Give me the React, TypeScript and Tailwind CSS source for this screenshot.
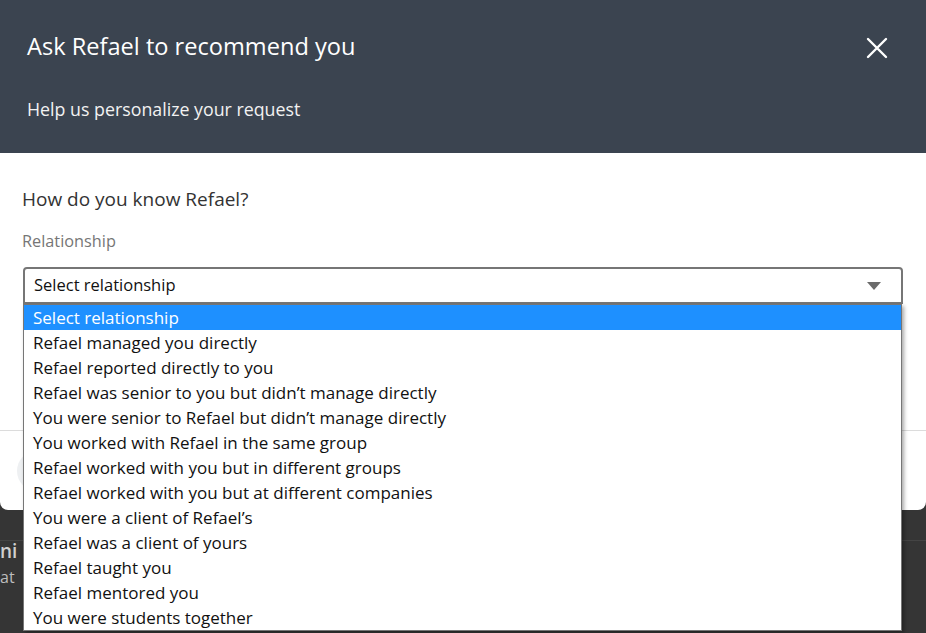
import React from "react";

const options = [
  "Select relationship",
  "Refael managed you directly",
  "Refael reported directly to you",
  "Refael was senior to you but didn\u2019t manage directly",
  "You were senior to Refael but didn\u2019t manage directly",
  "You worked with Refael in the same group",
  "Refael worked with you but in different groups",
  "Refael worked with you but at different companies",
  "You were a client of Refael\u2019s",
  "Refael was a client of yours",
  "Refael taught you",
  "Refael mentored you",
  "You were students together",
];

export default function App() {
  return (
    <div className="relative h-[633px] w-[926px] overflow-hidden bg-[#353535] font-['Open_Sans','Noto_Sans',sans-serif]">
      <div className="flex flex-col rounded-b-lg bg-white">
        <div className="flex h-[153px] flex-col bg-[#3b4450] pl-[27px] pr-[38px]">
          <div className="flex h-[94px] items-center justify-between">
            <h1 className="text-[23.6px] leading-none text-white">Ask Refael to recommend you</h1>
            <svg width="22" height="22" viewBox="0 0 22 22" className="mt-[1px]">
              <path d="M2 2 L20 20 M20 2 L2 20" stroke="#fff" strokeWidth="2.4" strokeLinecap="round" />
            </svg>
          </div>
          <p className="text-[17.8px] leading-[30px] text-[#f2f2f2]">Help us personalize your request</p>
        </div>
        <div className="flex flex-col px-[23px] pt-[31px]">
          <p className="ml-[-1px] text-[19px] leading-[30px] text-[#333]">How do you know Refael?</p>
          <p className="mt-[17px] ml-[-1px] text-[16.3px] leading-[20px] text-[#767676]">Relationship</p>
          <div className="mt-[16px] flex h-[37px] items-center justify-between rounded-t-[4px] border-2 border-[#767676] bg-white pl-[9px] pr-[20px]">
            <span className="text-[16.5px] text-[#111]">Select relationship</span>
            <svg width="14" height="8" viewBox="0 0 14 8">
              <path d="M0 0 H14 L7 8 Z" fill="#6b6b6b" />
            </svg>
          </div>
          <div className="h-[126px]" />
        </div>
        <div className="flex h-[80px] items-center border-t border-[#dcdcdc] px-[17px]">
          <div className="h-[40px] w-[160px] rounded-full bg-[#eef0f2]" />
        </div>
      </div>
      <div className="mt-[30px] border-t border-[#444] text-[#d0d0d0]">
        <p className="text-[19px] font-semibold leading-[20px]">ni</p>
        <p className="mt-[6px] text-[16px] leading-[20px] text-[#bdbdbd]">at</p>
      </div>

      <ul className="absolute left-[23px] top-[304px] w-[879px] border border-[#767676] bg-white shadow-[2px_2px_4px_rgba(0,0,0,0.35)]">
        {options.map((o, i) => (
          <li
            key={o}
            className={
              i === 0
                ? "h-[25px] bg-[#1e90ff] pl-[9px] text-[17px] leading-[25px] text-white"
                : "h-[25px] pl-[9px] text-[17px] leading-[25px] text-[#111]"
            }
          >
            {o}
          </li>
        ))}
      </ul>
    </div>
  );
}
